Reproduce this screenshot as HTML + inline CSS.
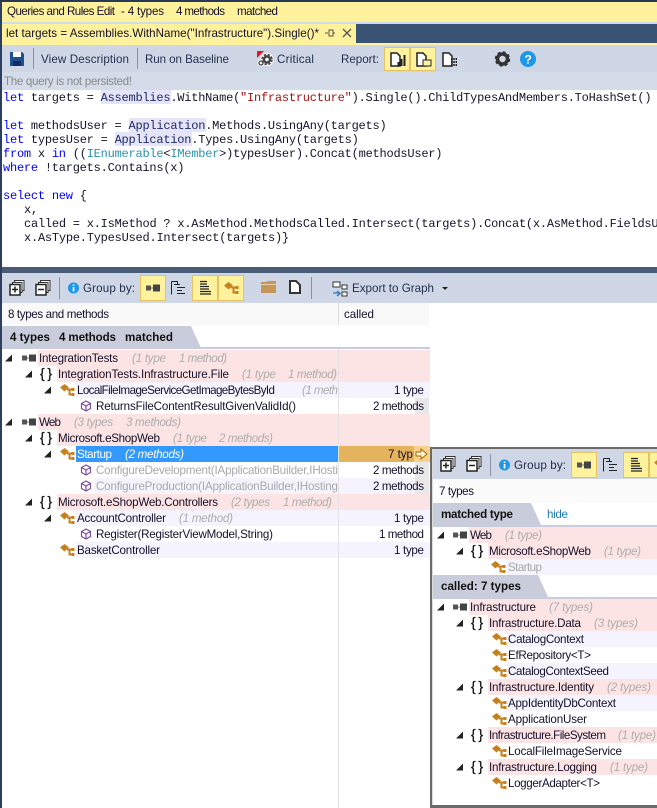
<!DOCTYPE html>
<html><head><meta charset="utf-8">
<style>
html,body{margin:0;padding:0;background:#fff;width:657px;height:808px;overflow:hidden}
svg{display:block}
text{font-family:"Liberation Sans",sans-serif;font-size:11.6px;fill:#14102a;white-space:pre}
.m{font-family:"Liberation Mono",monospace;font-size:12px;letter-spacing:-.23px;fill:#14142a}
.k{fill:#0000ff}.s{fill:#a31515}.t{fill:#2b91af}.n{fill:#1f2a6b}
.i{font-style:italic;fill:#adadad}
.b{font-weight:bold;fill:#111}
.tb{fill:#1f2f4d}
</style></head><body>
<svg width="657" height="808" viewBox="0 0 657 808" xmlns="http://www.w3.org/2000/svg">
<defs>
<g id="tri"><path d="M0 3.500L7 -3.500V3.500Z" fill="#222"/></g>
<g id="asm"><rect x="0" y="-2.500" width="5" height="5" fill="#555"/><rect x="5" y="-.5" width="2" height="1" fill="#777"/><rect x="7" y="-3.500" width="7" height="7" fill="#444"/></g>
<g id="cls"><path d="M0 -2.500L4.500 -6L9 -2.500L4.500 1.500Z" fill="#c8801f"/><path d="M7 -.5H13M9.500 -.5V4.500H13" fill="none" stroke="#c8801f" stroke-width="2"/><rect x="11.500" y="-2" width="3" height="3" fill="#c8801f"/><rect x="11.500" y="3" width="3" height="3" fill="#c8801f"/></g>
<g id="mth" fill="none" stroke="#7a4f9e" stroke-width="1.200"><path d="M5 -5L9.500 -2.500V2.500L5 5L.5 2.500V-2.500Z"/><path d="M.5 -2.500L5 0L9.500 -2.500M5 0V5"/></g>
<g id="ns"><text x="0" y="4" style="font-size:14px;fill:#111;stroke:#111;stroke-width:.3" textLength="12">{ }</text></g>
<g id="exp"><rect x="4.500" y="-7.500" width="9.500" height="10" fill="#fff" stroke="#333"/><rect x="2.500" y="-5.500" width="9.500" height="10" fill="#fff" stroke="#333"/><rect x="0" y="-3.500" width="10" height="10.500" fill="#fff" stroke="#222" stroke-width="1.500"/><path d="M2 1.500H8M5 -1.500V4.500" stroke="#222" stroke-width="1.500"/></g>
<g id="col"><rect x="4.500" y="-7.500" width="9.500" height="10" fill="#fff" stroke="#333"/><rect x="2.500" y="-5.500" width="9.500" height="10" fill="#fff" stroke="#333"/><rect x="0" y="-3.500" width="10" height="10.500" fill="#fff" stroke="#222" stroke-width="1.500"/><path d="M2 1.500H8" stroke="#222" stroke-width="1.500"/></g>
<g id="info"><circle cx="5.500" cy="0" r="5.500" fill="#1c97ea"/><rect x="4.700" y="-1" width="1.700" height="4.500" fill="#fff"/><rect x="4.700" y="-3.500" width="1.700" height="1.500" fill="#fff"/></g>
<g id="tree" fill="none" stroke="#222"><path d="M.5 -6.500H6.500V-4M.5 -6.500V6.500"/><path d="M3 -3.500H9M6 -.5H14M6 2.500H11M6 5.500H14" stroke-width="1.100"/></g>
<g id="list"><path d="M0 -6.500H7M0 -4H7M0 -1.500H9M0 1H9M0 3.500H11M0 6H11" stroke="#222" stroke-width="1.200"/></g>
<g id="yb"><rect x=".5" y=".5" width="25" height="25" fill="#fff29d" stroke="#e5c365"/></g>
</defs>

<!-- window chrome -->
<rect width="657" height="808" fill="#fff"/>
<rect width="657" height="2" fill="#293955"/>
<rect y="2" width="657" height="20" fill="#fff29d"/>
<rect y="22" width="657" height="2" fill="#d3dae8"/>
<rect y="24" width="657" height="19" fill="#3a5273"/>
<rect y="24" width="356" height="19" fill="#fff29d"/>
<rect y="43" width="657" height="2" fill="#fff29d"/>
<rect y="45" width="657" height="27" fill="#cfd6e5"/>
<rect y="72" width="657" height="18" fill="#d4dbe9"/>
<rect y="267" width="657" height="6" fill="#4a5d78"/>
<rect y="273" width="657" height="30" fill="#cfd6e5"/>
<rect x="0" y="0" width="2" height="808" fill="#2d3e5e"/>
<rect x="0" y="0" width="657" height="2" fill="#293955"/>

<text x="7" y="15" textLength="108">Queries and Rules Edit</text>
<text x="121" y="15" textLength="43">- 4 types</text>
<text x="176" y="15" textLength="49">4 methods</text>
<text x="237" y="15" textLength="41">matched</text>
<text x="6" y="37" textLength="313">let targets = Assemblies.WithName("Infrastructure").Single()*</text>
<path d="M325 33H328M329 30V36H333V30ZM333 33H335" stroke="#555" fill="none"/>
<path d="M343 29L351 37M351 29L343 37" stroke="#555" stroke-width="1.300"/>

<!-- toolbar 1 -->
<path d="M10 52H22L24 54V66H10Z" fill="#1f4e91"/><rect x="13" y="52" width="8" height="5" fill="#fff"/><rect x="13" y="61" width="8" height="5" fill="#0d2f66"/>
<rect x="33" y="48" width="1" height="21" fill="#8a93a6"/>
<text x="41" y="63" class="tb" textLength="88">View Description</text>
<rect x="137" y="48" width="1" height="21" fill="#8a93a6"/>
<text x="145" y="63" class="tb" textLength="84">Run on Baseline</text>
<path d="M257 51H264L257 58Z" fill="#e81123"/>
<circle cx="267" cy="59.500" r="6.500" fill="#fff"/><circle cx="261" cy="63" r="3.500" fill="#fff"/>
<circle cx="267" cy="59.500" r="3" fill="none" stroke="#444" stroke-width="2.500"/><circle cx="267" cy="59.500" r="5" fill="none" stroke="#444" stroke-width="1.500" stroke-dasharray="2.500 1.500"/><circle cx="261" cy="63" r="2" fill="none" stroke="#444" stroke-width="1.300"/>
<text x="277" y="63" class="tb" textLength="37">Critical</text>
<text x="341" y="63" class="tb" textLength="38">Report:</text>
<g transform="translate(384 47)"><rect x=".5" y=".5" width="25" height="23" fill="#fff29d" stroke="#e5c365"/></g>
<g transform="translate(410 47)"><rect x=".5" y=".5" width="25" height="23" fill="#fff29d" stroke="#e5c365"/></g>
<path d="M391 53H397L400 56V66H391Z" fill="#fff" stroke="#222" stroke-width="1.500"/><path d="M398.500 66V62M401.500 66V59M404.500 66V55" stroke="#222" stroke-width="2"/>
<path d="M417 53H423L426 56V66H417Z" fill="#fff" stroke="#222" stroke-width="1.500"/><rect x="423" y="60" width="8" height="6" fill="#fff29d" stroke="#222"/>
<path d="M443 53H449L452 56V66H443Z" fill="#fff" stroke="#222" stroke-width="1.500"/><path d="M451 59H457M451 62H457M451 65H457" stroke="#222" stroke-width="2" stroke-dasharray="1.500 .8"/>
<circle cx="502.500" cy="59" r="5" fill="none" stroke="#333" stroke-width="3.500"/><circle cx="502.500" cy="59" r="7" fill="none" stroke="#333" stroke-width="1.500" stroke-dasharray="3 2.500"/>
<circle cx="528" cy="59" r="8" fill="#1c97ea"/><text x="524.500" y="63.500" style="font-size:12px;font-weight:bold;fill:#fff">?</text>
<text x="4" y="85" style="fill:#8a8a8a" textLength="128">The query is not persisted!</text>

<!-- code -->
<rect x="101" y="90" width="70" height="14" fill="#e5e5f7"/>
<rect x="129" y="118" width="77" height="14" fill="#e5e5f7"/>
<rect x="115" y="132" width="77" height="14" fill="#e5e5f7"/>
<text class="m" x="3" y="101"><tspan class="k">let</tspan> targets = <tspan class="n">Assemblies</tspan>.WithName(<tspan class="s">"Infrastructure"</tspan>).Single().ChildTypesAndMembers.ToHashSet()</text>
<text class="m" x="3" y="129"><tspan class="k">let</tspan> methodsUser = <tspan class="n">Application</tspan>.Methods.UsingAny(targets)</text>
<text class="m" x="3" y="143"><tspan class="k">let</tspan> typesUser = <tspan class="n">Application</tspan>.Types.UsingAny(targets)</text>
<text class="m" x="3" y="157"><tspan class="k">from</tspan> x <tspan class="k">in</tspan> ((<tspan class="t">IEnumerable</tspan>&lt;<tspan class="t">IMember</tspan>&gt;)typesUser).Concat(methodsUser)</text>
<text class="m" x="3" y="171"><tspan class="k">where</tspan> !targets.Contains(x)</text>
<text class="m" x="3" y="199"><tspan class="k">select</tspan> <tspan class="k">new</tspan> {</text>
<text class="m" x="24" y="213">x,</text>
<text class="m" x="24" y="227">called = x.IsMethod ? x.AsMethod.MethodsCalled.Intersect(targets).Concat(x.AsMethod.FieldsUsed</text>
<text class="m" x="24" y="241">x.AsType.TypesUsed.Intersect(targets)}</text>

<!-- toolbar 2 -->
<use href="#exp" x="10" y="288"/>
<use href="#col" x="36" y="288"/>
<rect x="59" y="277" width="1" height="22" fill="#8a93a6"/>
<use href="#info" x="68" y="288"/>
<text x="83" y="292" class="tb" textLength="52">Group by:</text>
<use href="#yb" x="140" y="275"/>
<use href="#asm" x="146" y="288"/>
<use href="#tree" x="171" y="288"/>
<use href="#yb" x="192" y="275"/>
<use href="#list" x="200" y="288"/>
<use href="#yb" x="218" y="275"/>
<use href="#cls" x="224" y="288"/>
<path d="M261 282H276V293H261Z" fill="#c4965a"/><path d="M261 284.500H276" stroke="#e8d2ac"/><rect x="267" y="281" width="9" height="1.500" fill="#c4965a"/>
<path d="M290 281H296L300 285V293H290Z" fill="#fff" stroke="#333" stroke-width="2"/>
<rect x="311" y="277" width="1" height="22" fill="#8a93a6"/>
<rect x="333" y="282" width="7" height="5" fill="#fff" stroke="#333"/><rect x="342" y="285" width="5" height="4" fill="#fff" stroke="#333"/><rect x="342" y="292" width="5" height="4" fill="#fff" stroke="#333"/>
<path d="M333 293H339M337 291L340 293.500L337 296" stroke="#1c7ad0" fill="none" stroke-width="1.300"/>
<text x="352" y="292" class="tb" textLength="82">Export to Graph</text>
<path d="M442 287H448L445 290Z" fill="#222"/>

<!-- header -->
<rect x="2" y="303" width="427" height="22" fill="#f9f9f9"/>
<rect x="338" y="303" width="1" height="22" fill="#ddd"/>
<text x="8" y="318" textLength="101">8 types and methods</text>
<text x="344" y="318" textLength="30">called</text>
<path d="M2 326H191L201 348H2Z" fill="#c8ccdb"/>
<text x="10" y="341" class="b" textLength="40">4 types</text>
<text x="59" y="341" class="b" textLength="57">4 methods</text>
<text x="125" y="341" class="b" textLength="48">matched</text>
<rect x="2" y="347" width="428" height="2" fill="#c8ccdb"/>

<!-- rows bg -->
<rect x="38" y="350" width="300" height="16" fill="#fde4e4"/>
<rect x="57" y="366" width="281" height="16" fill="#fde4e4"/>
<rect x="76" y="382" width="262" height="16" fill="#f5f3fd"/>
<rect x="38" y="414" width="300" height="16" fill="#fde4e4"/>
<rect x="57" y="430" width="281" height="16" fill="#fde4e4"/>
<rect x="76" y="446" width="262" height="16" fill="#3399ff"/>
<rect x="95" y="478" width="243" height="16" fill="#f5f3fd"/>
<rect x="57" y="494" width="281" height="16" fill="#fde4e4"/>
<rect x="76" y="510" width="262" height="16" fill="#f5f3fd"/>
<rect x="76" y="542" width="262" height="16" fill="#f5f3fd"/>
<rect x="339" y="350" width="91" height="32" fill="#fde4e4"/>
<rect x="339" y="382" width="91" height="16" fill="#f5f3fd"/>
<rect x="339" y="414" width="91" height="32" fill="#fde4e4"/>
<rect x="339" y="446" width="91" height="16" fill="#e5b25d"/>
<rect x="339" y="478" width="91" height="16" fill="#f5f3fd"/>
<rect x="339" y="494" width="91" height="16" fill="#fde4e4"/>
<rect x="339" y="510" width="91" height="16" fill="#f5f3fd"/>
<rect x="339" y="542" width="91" height="16" fill="#f5f3fd"/>
<rect x="415" y="398" width="14" height="16" fill="#e8e8e8"/>
<rect x="415" y="462" width="14" height="32" fill="#e8e8e8"/>
<rect x="338" y="349" width="1" height="459" fill="#e3e3e3"/>
<rect x="414" y="446" width="16" height="16" fill="#fbd08a"/>
<path d="M416 452H421V449L427 454L421 459V456H416Z" fill="#fff3c8" stroke="#a36a10"/>

<!-- tree -->
<use href="#tri" x="5" y="358"/><use href="#asm" x="22" y="358"/>
<text x="39" y="362" textLength="79">IntegrationTests</text><text x="132" y="362" class="i" textLength="34">(1 type</text><text x="179" y="362" class="i" textLength="48">1 method)</text>
<use href="#tri" x="25" y="374"/><use href="#ns" x="40" y="374"/>
<text x="58" y="378" textLength="171">IntegrationTests.Infrastructure.File</text><text x="242" y="378" class="i" textLength="34">(1 type</text><text x="288" y="378" class="i" textLength="49">1 method)</text>
<use href="#tri" x="44" y="390"/><use href="#cls" x="60" y="390"/>
<text x="77" y="394" textLength="198">LocalFileImageServiceGetImageBytesById</text><text x="302" y="394" class="i" textLength="36">(1 meth</text>
<use href="#mth" x="81" y="406"/>
<text x="96" y="410" textLength="200">ReturnsFileContentResultGivenValidId()</text>
<use href="#tri" x="5" y="422"/><use href="#asm" x="22" y="422"/>
<text x="39" y="426" textLength="22">Web</text><text x="74" y="426" class="i" textLength="39">(3 types</text><text x="126" y="426" class="i" textLength="55">3 methods)</text>
<use href="#tri" x="25" y="438"/><use href="#ns" x="40" y="438"/>
<text x="58" y="442" textLength="102">Microsoft.eShopWeb</text><text x="173" y="442" class="i" textLength="34">(1 type</text><text x="219" y="442" class="i" textLength="54">2 methods)</text>
<use href="#tri" x="44" y="454"/><use href="#cls" x="60" y="454"/>
<text x="77" y="458" style="fill:#fff" textLength="35">Startup</text><text x="125" y="458" class="i" style="fill:#fff" textLength="59">(2 methods)</text>
<use href="#mth" x="81" y="470"/>
<text x="96" y="474" style="fill:#a8a8a8" textLength="242">ConfigureDevelopment(IApplicationBuilder,IHosti</text>
<use href="#mth" x="81" y="486"/>
<text x="96" y="490" style="fill:#a8a8a8" textLength="242">ConfigureProduction(IApplicationBuilder,IHosting</text>
<use href="#tri" x="25" y="502"/><use href="#ns" x="40" y="502"/>
<text x="58" y="506" textLength="160">Microsoft.eShopWeb.Controllers</text><text x="231" y="506" class="i" textLength="39">(2 types</text><text x="283" y="506" class="i" textLength="49">1 method)</text>
<use href="#tri" x="44" y="518"/><use href="#cls" x="60" y="518"/>
<text x="77" y="522" textLength="89">AccountController</text><text x="179" y="522" class="i" textLength="54">(1 method)</text>
<use href="#mth" x="81" y="534"/>
<text x="96" y="538" textLength="177">Register(RegisterViewModel,String)</text>
<use href="#cls" x="60" y="550"/>
<text x="77" y="554" textLength="83">BasketController</text>

<text x="394" y="394" textLength="30">1 type</text>
<text x="373" y="410" textLength="51">2 methods</text>
<text x="388" y="458" textLength="25">7 typ</text>
<text x="373" y="474" textLength="51">2 methods</text>
<text x="373" y="490" textLength="51">2 methods</text>
<text x="394" y="522" textLength="30">1 type</text>
<text x="379" y="538" textLength="45">1 method</text>
<text x="394" y="554" textLength="30">1 type</text>

<!-- popup panel -->
<rect x="430" y="447" width="227" height="361" fill="#fff"/>
<rect x="430" y="447" width="227" height="2" fill="#6a6a6a"/>
<rect x="430" y="447" width="2" height="361" fill="#6a6a6a"/>
<rect x="430" y="805" width="227" height="3" fill="#6a6a6a"/>
<rect x="432" y="449" width="1" height="356" fill="#dcdcdc"/>
<rect x="433" y="449" width="224" height="30" fill="#cfd6e5"/>
<use href="#exp" x="441" y="464"/>
<use href="#col" x="467" y="464"/>
<rect x="490" y="454" width="1" height="22" fill="#8a93a6"/>
<use href="#info" x="499" y="465"/>
<text x="514" y="469" class="tb" textLength="52">Group by:</text>
<use href="#yb" x="571" y="452"/>
<use href="#asm" x="577" y="465"/>
<use href="#tree" x="603" y="465"/>
<use href="#yb" x="623" y="452"/>
<use href="#list" x="631" y="465"/>
<use href="#yb" x="649" y="452"/>
<use href="#cls" x="654" y="465"/>
<rect x="433" y="479" width="224" height="24" fill="#fbfbfb"/>
<text x="439" y="495" textLength="35">7 types</text>
<path d="M433 503H531L541 525H433Z" fill="#c8ccdb"/>
<text x="441" y="518" class="b" textLength="72">matched type</text>
<text x="547" y="518" style="fill:#1b7ac0" textLength="21">hide</text>
<rect x="433" y="525" width="224" height="2" fill="#c8ccdb"/>

<rect x="469" y="527" width="188" height="16" fill="#fde4e4"/>
<rect x="488" y="543" width="169" height="16" fill="#fde4e4"/>
<rect x="507" y="559" width="150" height="16" fill="#f5f3fd"/>
<use href="#tri" x="437" y="535"/><use href="#asm" x="453" y="535"/>
<text x="470" y="539" textLength="22">Web</text><text x="505" y="539" class="i" textLength="37">(1 type)</text>
<use href="#tri" x="456" y="551"/><use href="#ns" x="471" y="551"/>
<text x="489" y="555" textLength="102">Microsoft.eShopWeb</text><text x="604" y="555" class="i" textLength="37">(1 type)</text>
<use href="#cls" x="491" y="567"/>
<text x="508" y="571" style="fill:#a8a8a8" textLength="34">Startup</text>

<path d="M433 575H538L548 597H433Z" fill="#c8ccdb"/>
<text x="441" y="590" class="b" textLength="80">called: 7 types</text>
<rect x="433" y="597" width="224" height="2" fill="#c8ccdb"/>

<rect x="469" y="599" width="188" height="16" fill="#fde4e4"/>
<rect x="488" y="615" width="169" height="16" fill="#fde4e4"/>
<rect x="507" y="631" width="150" height="16" fill="#f5f3fd"/>
<rect x="507" y="663" width="150" height="16" fill="#f5f3fd"/>
<rect x="488" y="679" width="169" height="16" fill="#fde4e4"/>
<rect x="507" y="695" width="150" height="16" fill="#f5f3fd"/>
<rect x="488" y="727" width="169" height="16" fill="#fde4e4"/>
<rect x="488" y="759" width="169" height="16" fill="#fde4e4"/>

<use href="#tri" x="437" y="607"/><use href="#asm" x="453" y="607"/>
<text x="470" y="611" textLength="66">Infrastructure</text><text x="549" y="611" class="i" textLength="44">(7 types)</text>
<use href="#tri" x="456" y="623"/><use href="#ns" x="471" y="623"/>
<text x="489" y="627" textLength="92">Infrastructure.Data</text><text x="594" y="627" class="i" textLength="44">(3 types)</text>
<use href="#cls" x="492" y="639"/><text x="508" y="643" textLength="76">CatalogContext</text>
<use href="#cls" x="492" y="655"/><text x="508" y="659" textLength="83">EfRepository&lt;T&gt;</text>
<use href="#cls" x="492" y="671"/><text x="508" y="675" textLength="101">CatalogContextSeed</text>
<use href="#tri" x="456" y="687"/><use href="#ns" x="471" y="687"/>
<text x="489" y="691" textLength="105">Infrastructure.Identity</text><text x="607" y="691" class="i" textLength="44">(2 types)</text>
<use href="#cls" x="492" y="703"/><text x="508" y="707" textLength="108">AppIdentityDbContext</text>
<use href="#cls" x="492" y="719"/><text x="508" y="723" textLength="79">ApplicationUser</text>
<use href="#tri" x="456" y="735"/><use href="#ns" x="471" y="735"/>
<text x="489" y="739" textLength="117">Infrastructure.FileSystem</text><text x="618" y="739" class="i" textLength="38">(1 type)</text>
<use href="#cls" x="492" y="751"/><text x="508" y="755" textLength="114">LocalFileImageService</text>
<use href="#tri" x="456" y="767"/><use href="#ns" x="471" y="767"/>
<text x="489" y="771" textLength="108">Infrastructure.Logging</text><text x="610" y="771" class="i" textLength="38">(1 type)</text>
<use href="#cls" x="492" y="783"/><text x="508" y="787" textLength="92">LoggerAdapter&lt;T&gt;</text>
</svg>
</body></html>
